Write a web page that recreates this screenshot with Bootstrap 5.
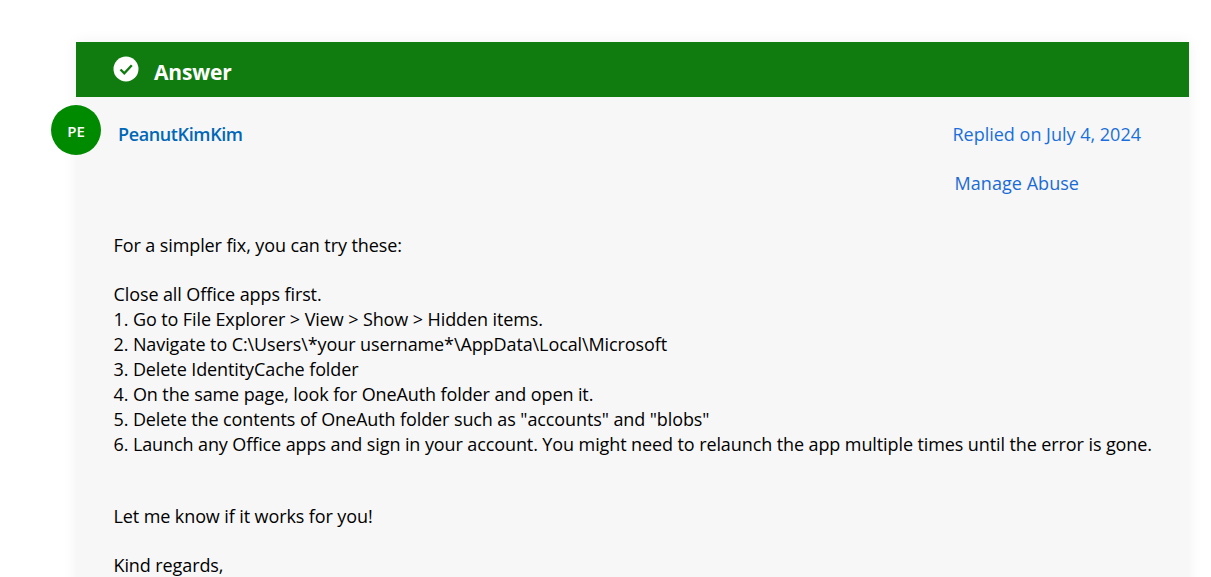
<!DOCTYPE html>
<html lang="en">
<head>
  <meta charset="UTF-8">
  <title>Answer</title>
  <link href="https://cdn.jsdelivr.net/npm/bootstrap@5.3.2/dist/css/bootstrap.min.css" rel="stylesheet">
  <style>
    html, body { height: 577px; overflow: hidden; background: #fff; }
    body { font-family: "Open Sans", "Noto Sans", sans-serif; color: #000; }
    .answer-wrap { margin: 42px 22px 0 76px; background: #f7f7f7; box-shadow: 0 0 14px rgba(0,0,0,.06); position: relative; height: 600px; }
    .answer-head { height: 55px; background: #107c10; padding-left: 37px; gap: 15px; color: #fff; }
    .answer-head span { font-size: 21px; font-weight: 700; letter-spacing: -.15px; margin-top: 6px; }
    .answer-head svg { margin-top: -1px; }
    .avatar-pe { position: absolute; left: -25px; top: 63px; width: 50px; height: 50px; border-radius: 50%; background: #008a00; color: #fff; font-size: 15px; font-weight: 600; padding-top: 2px; }
    .meta-row { padding: 25px 48px 0 42px; height: 74px; }
    .author { color: #0067b8; font-size: 18px; font-weight: 600; letter-spacing: -.38px; text-decoration: none; line-height: 25px; }
    .replied { color: #1a6fdc; font-size: 18px; letter-spacing: 0; line-height: 25px; text-decoration: none; }
    .abuse-row { padding-left: 878.5px; height: 50px; line-height: 25px; }
    .abuse-row a { color: #1a6bd6; font-size: 18px; letter-spacing: .05px; text-decoration: none; }
    .post-text { padding: 0 20px 0 37.5px; margin-top: 12px; font-size: 18px; line-height: 25px; letter-spacing: -.1px; white-space: nowrap; }
    .post-text p { margin: 0; }
    .gap-one { height: 24px; }
    .gap-two { height: 47px; }
  </style>
</head>
<body>
  <div class="answer-wrap">
    <div class="answer-head d-flex align-items-center">
      <svg width="26" height="26" viewBox="0 0 26 26"><circle cx="13" cy="13" r="12.5" fill="#fff"/><path d="M7.5 13.5l3.8 3.8 7.5-8" fill="none" stroke="#107c10" stroke-width="2.4"/></svg>
      <span>Answer</span>
    </div>
    <div class="avatar-pe d-flex align-items-center justify-content-center">PE</div>
    <div class="meta-row d-flex justify-content-between">
      <a class="author" href="#">PeanutKimKim</a>
      <a class="replied" href="#">Replied on July 4, 2024</a>
    </div>
    <div class="abuse-row"><a href="#">Manage Abuse</a></div>
    <div class="post-text">
      <p>For a simpler fix, you can try these:</p>
      <div class="gap-one"></div>
      <p>Close all Office apps first.</p>
      <p>1. Go to File Explorer &gt; View &gt; Show &gt; Hidden items.</p>
      <p>2. Navigate to C:\Users\*your username*\AppData\Local\Microsoft</p>
      <p>3. Delete IdentityCache folder</p>
      <p>4. On the same page, look for OneAuth folder and open it.</p>
      <p>5. Delete the contents of OneAuth folder such as "accounts" and "blobs"</p>
      <p>6. Launch any Office apps and sign in your account. You might need to relaunch the app multiple times until the error is gone.</p>
      <div class="gap-two"></div>
      <p>Let me know if it works for you!</p>
      <div class="gap-one"></div>
      <p>Kind regards,</p>
    </div>
  </div>
  <script src="https://cdn.jsdelivr.net/npm/bootstrap@5.3.2/dist/js/bootstrap.bundle.min.js"></script>
</body>
</html>
